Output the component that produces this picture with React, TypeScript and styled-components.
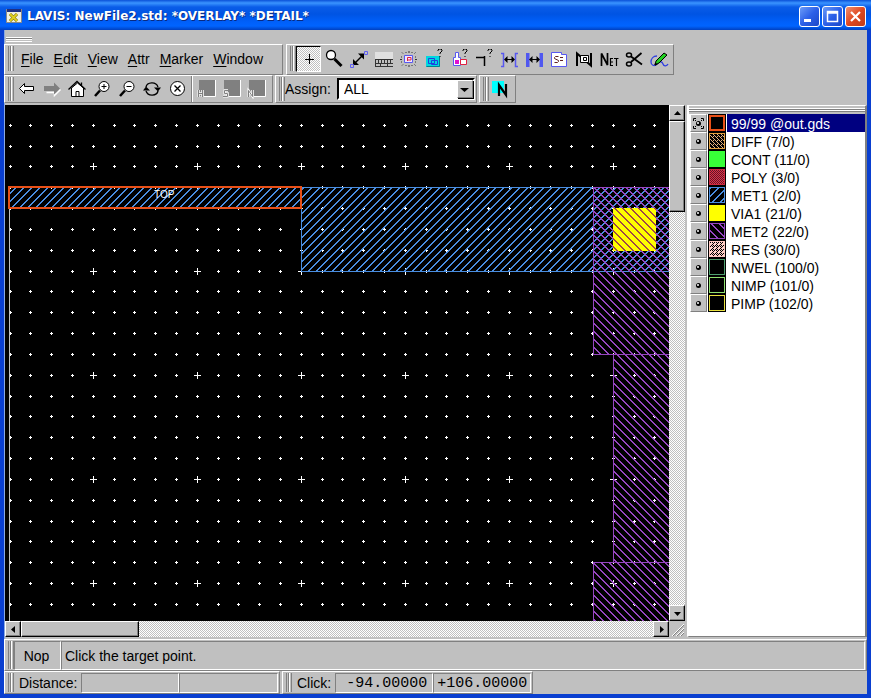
import React from "react";
import styled, { createGlobalStyle, css } from "styled-components";

const face = "#c0c0c0";
const shade = "#808080";
const met1 = "#4a8ee0";
const met2 = "#9646c0";
const outline = "#e85018";

const Global = createGlobalStyle`
  * { box-sizing: border-box; }
  body { margin: 0; font: 14px/18px "Liberation Sans", Arial, sans-serif; color: #000; }
  button, select, input { font: inherit; color: inherit; margin: 0; padding: 0; border: 0; border-radius: 0; background: none; }
  svg { display: block; }
`;

const raised = css`
  border: 1px solid;
  border-color: #fff ${shade} ${shade} #fff;
`;
const sunken = css`
  border: 1px solid;
  border-color: ${shade} #fff #fff ${shade};
`;

const Window = styled.div`
  display: flex;
  flex-direction: column;
  min-height: 100vh;
  background: ${face};
  border: solid #0a3fd0;
  border-width: 0 4px 4px;
  box-shadow: inset 1px 0 #8aa8e0;
`;
const TitleBar = styled.header`
  display: flex;
  align-items: center;
  height: 30px;
  margin: 0 -4px;
  padding: 2px 5px 0 6px;
  background: linear-gradient(#0a50d8, #3a94ff 3px, #0a5ce8 7px, #0054e3 14px, #0060fa 22px, #0064ff 26px, #0040c0 30px);
`;
const Title = styled.h1`
  flex: 1;
  margin: 0 0 0 5px;
  font: bold 12px/16px "DejaVu Sans", sans-serif;
  color: #fff;
  text-shadow: 1px 1px #0a2a80;
`;
const Caption = styled.button<{ $close?: boolean }>`
  width: 21px;
  height: 21px;
  margin-left: 2px;
  border: 1px solid #fff;
  border-radius: 3px;
  background: ${(p) =>
    p.$close
      ? "linear-gradient(135deg, #f09070, #e04820 50%, #c03c18)"
      : "linear-gradient(135deg, #6c9cf8, #2c60e8 50%, #1c48c8)"};
`;
const TopGrip = styled.div`
  width: 26px;
  height: 5px;
  margin: 7px 0 2px 2px;
  border: solid;
  border-width: 1px 0;
  border-color: #fff ${shade};
  background: linear-gradient(${shade} 1px, #fff 1px, #fff 2px, ${face} 2px);
`;
const Bars = styled.div<{ $gap?: number }>`
  display: flex;
  gap: ${(p) => p.$gap ?? 2}px;
  flex: none;
`;
const Bar = styled.div<{ $height: number; $grow?: boolean; $width?: number; $end?: number; $lift?: boolean }>`
  ${raised}
  display: flex;
  align-items: center;
  flex: ${(p) => (p.$grow ? "1 1 auto" : "none")};
  width: ${(p) => (p.$width ? p.$width + "px" : "auto")};
  height: ${(p) => p.$height}px;
  padding: 0 ${(p) => p.$end ?? 0}px ${(p) => (p.$lift ? 2 : 0)}px 3px;
`;
const Grip = styled.div`
  flex: none;
  align-self: stretch;
  width: 6px;
  margin: 1px 0;
  border: solid;
  border-width: 0 1px;
  border-color: #fff ${shade};
  background: linear-gradient(90deg, ${face} 1px, ${shade} 1px, ${shade} 2px, #fff 2px, #fff 3px, ${face} 3px);
`;
const Menu = styled.nav`
  display: flex;
  gap: 10px;
  padding-left: 7px;
`;
const MenuItem = styled.button`
  line-height: 18px;
`;
const Underlined = styled.span`
  text-decoration: underline;
  text-underline-offset: 2px;
  text-decoration-thickness: 1px;
`;
const Tool = styled.button<{ $pressed?: boolean }>`
  display: grid;
  place-items: center;
  flex: none;
  width: 25px;
  height: 26px;
  ${(p) =>
    p.$pressed &&
    css`
      border: 1px solid;
      border-color: #000 #fff #fff #000;
      background: repeating-conic-gradient(#fff 0 25%, ${face} 0 50%) 0 0 / 2px 2px;
    `}
`;
const Divider = styled.div`
  width: 2px;
  height: 26px;
  margin: 0 0 0 2px;
  border-left: 1px solid ${shade};
  border-right: 1px solid #fff;
`;
const Combo = styled.div`
  position: relative;
  width: 138px;
  height: 22px;
  margin-left: 6px;
  border: 2px solid;
  border-color: #000 #fff #fff #000;
  background: #fff;
`;
const Choice = styled.select`
  appearance: none;
  width: 100%;
  height: 18px;
  padding-left: 5px;
  outline: 0;
`;
const ComboArrow = styled.span`
  ${raised}
  position: absolute;
  right: 0;
  top: 0;
  display: grid;
  place-items: center;
  width: 16px;
  height: 18px;
  background: ${face};
  box-shadow: 1px 1px #000;
  pointer-events: none;
`;
const Work = styled.main`
  flex: 1;
  display: grid;
  grid-template-columns: minmax(0, 1fr) 180px;
  gap: 2px;
  padding-left: 1px;
  margin-top: 2px;
`;
const View = styled.section`
  display: grid;
  grid-template-columns: minmax(0, 1fr) 16px;
  grid-template-rows: minmax(0, 1fr) 16px;
`;
const Canvas = styled.svg`
  width: 100%;
  height: 100%;
  background: #000;
`;
const Track = styled.div<{ $vertical?: boolean }>`
  display: flex;
  flex-direction: ${(p) => (p.$vertical ? "column" : "row")};
  justify-content: space-between;
  background: repeating-conic-gradient(#fff 0 25%, ${face} 0 50%) 0 0 / 2px 2px;
`;
const TrackEnd = styled.div<{ $vertical?: boolean }>`
  display: flex;
  flex-direction: ${(p) => (p.$vertical ? "column" : "row")};
`;
const Key = styled.button`
  display: grid;
  place-items: center;
  width: 16px;
  height: 16px;
  border: 1px solid;
  border-color: #fff #000 #000 #fff;
  background: ${face};
  box-shadow: inset -1px -1px ${shade};
`;
const Thumb = styled.div<{ $vertical?: boolean }>`
  width: ${(p) => (p.$vertical ? 16 : 118)}px;
  height: ${(p) => (p.$vertical ? 91 : 16)}px;
  border: 1px solid;
  border-color: #fff #000 #000 #fff;
  background: ${face};
  box-shadow: inset -1px -1px ${shade};
`;
const Layers = styled.aside`
  border: 1px solid;
  border-color: #fff ${shade} ${shade} #fff;
  border-width: 1px 2px 1px 2px;
  background: #fff;
`;
const LayerGrip = styled.div`
  height: 8px;
  border: solid ${face};
  border-width: 2px 0 2px;
  background: linear-gradient(#fff 1px, ${shade} 1px, ${shade} 2px, #fff 2px, #fff 3px, ${shade} 3px);
`;
const LayerList = styled.ul`
  margin: 0;
  padding: 0 0 0 1px;
  list-style: none;
`;
const Layer = styled.li`
  display: flex;
  height: 18px;
`;
const Eye = styled.button`
  display: grid;
  place-items: center;
  width: 17px;
  height: 18px;
  border: 1px solid;
  border-color: #fff ${shade} ${shade} #fff;
  background: ${face};
`;
const LayerName = styled.button<{ $active?: boolean }>`
  flex: 1;
  padding: 2px 0 0 4px;
  line-height: 16px;
  text-align: left;
  background: ${(p) => (p.$active ? "#000080" : "#fff")};
  color: ${(p) => (p.$active ? "#fff" : "#000")};
`;
const Field = styled.output<{ $width?: number; $height: number; $mono?: boolean; $center?: boolean }>`
  ${sunken}
  flex: ${(p) => (p.$width ? "none" : "1")};
  width: ${(p) => (p.$width ? p.$width + "px" : "auto")};
  height: ${(p) => p.$height}px;
  line-height: ${(p) => p.$height - 1}px;
  padding: 0 5px 0 3px;
  text-align: ${(p) => (p.$mono ? "right" : p.$center ? "center" : "left")};
  ${(p) => p.$mono && css`font-family: "Liberation Mono", monospace; font-size: 15px;`}
`;
const FieldLabel = styled.label`
  padding: 0 4px 0 5px;
`;
const Status = styled.footer`
  margin-top: 2px;
`;

/* 20 x 20 toolbar glyphs */
const Glyph = ({ children }: { children: React.ReactNode }) => (
  <svg width="20" height="20" viewBox="0 0 20 20" fill="none" stroke="#000" aria-hidden="true">
    {children}
  </svg>
);
const Query = ({ x = 16, y = 2 }: { x?: number; y?: number }) => (
  <path d={`M${x - 2} ${y}v-1l1-1h2l1 1v1l-2 2v1M${x} ${y + 5}v1`} strokeWidth="1" />
);
const Gap = () => <path d="M6 10.5h9" />;
const Heads = () => <path d="M5 10.5l3.5-3.5v7zM16 10.5l-3.5-3.5v7z" fill="#000" stroke="none" />;

const editTools: { name: string; art: React.ReactNode }[] = [
  { name: "Point", art: <path d="M10.5 5v10M6 10h9" shapeRendering="crispEdges" /> },
  {
    name: "Zoom",
    art: (<><circle cx="7" cy="6" r="4.5" fill="#fff" strokeWidth="1.3" /><path d="M10.5 10l7 7" strokeWidth="3" /></>),
  },
  {
    name: "Measure",
    art: (<>
      <path d="M5 15l9-9" strokeWidth="1.5" /><path d="M15 4.5v6l-6-6zM4 16v-6l6 6z" fill="#000" stroke="none" />
      <path d="M15.5 2.5h3v3h-3zM1.5 15.5h3v3h-3z" stroke="#6060f0" />
    </>),
  },
  {
    name: "Ruler",
    art: (<g shapeRendering="crispEdges">
      <path d="M1 3h18v7H1z" fill="#e0e0e0" stroke="none" />
      <path d="M1.5 10v7M1 10.5h18M1 14.5h18M4.5 11v3M7.5 11v3M10.5 11v3M13.5 11v3M16.5 11v3" stroke="#333" />
      <path d="M1 17.5h18M6.5 15v2M13.5 15v2" stroke="#333" />
    </g>),
  },
  {
    name: "Highlight",
    art: (<>
      <path d="M5.500 6.500h8v7h-8z" fill="#f0e8ff" stroke="#5858f0" /><path d="M8.500 12V8.500H12v2.500H9" stroke="#e02040" />
      <path d="M7 4V3M10 4V2M13 4V3M7 16v1M10 16v2M13 16v1M3 8H2M3 10.500H1M3 13H2M16 8h1M16 10.500h2M16 13h1M4 4.500l-1-1M15.500 4.500l1-1M4 15.500l-1 1M15.500 15.500l1 1" stroke="#333" />
    </>),
  },
  {
    name: "Query cell",
    art: (<>
      <path d="M2 7h14v11H2z" fill="#00d8e0" stroke="none" /><path d="M2.5 17.5h13v-10" stroke="#008090" />
      <path d="M4.5 9.5h6v5h-6zM7.5 11.5h6v4h-6z" stroke="#2040e0" /><Query />
    </>),
  },
  {
    name: "Query shape",
    art: (<>
      <path d="M6.5 3.5h3v5h2v8h-7v-8h2z" fill="#fff" stroke="#5858f0" /><path d="M6 11h4v4H6z" fill="#e010d0" stroke="none" />
      <path d="M11.5 10.5h6v5h-6z" fill="#fff" stroke="#e02040" /><Query />
    </>),
  },
  { name: "Query node", art: (<><path d="M2 8.5h9M10.5 7v10" strokeWidth="1.5" /><Query /></>) },
  {
    name: "Space",
    art: (<><path d="M2 4.5h2.5v13H2M19 4.5h-2.5v13H19" stroke="#5858f0" strokeWidth="1.5" /><Gap /><Heads /></>),
  },
  {
    name: "Width",
    art: (<><path d="M2 4h3.5v14H2zM15.5 4H19v14h-3.5z" fill="#5058f0" stroke="none" /><Gap /><Heads /></>),
  },
  {
    name: "Script",
    art: (<>
      <path d="M2.5 3.5h10v2h5v12h-15z" fill="#fff" stroke="#5858f0" />
      <path d="M9.5 7.5h-3l-1 1v1l4 2v1l-1 1h-3M11 8.5h3M11 11.5h3" stroke="#602020" />
    </>),
  },
  {
    name: "Net box",
    art: (<>
      <path d="M3 17V4.5l14 12V4" strokeWidth="2" /><path d="M6.5 6.5h8v7h-8z" fill="#fff" /><path d="M9.5 8.5h3v3h-3z" />
    </>),
  },
  {
    name: "Net",
    art: (<><path d="M2.5 17V4.5L8.5 16V4" strokeWidth="1.7" /><path d="M14 9.5h-2.5v7H14M11.5 13H14M15 9.5h4.5M17.5 9.5V17" strokeWidth="1.2" /></>),
  },
  {
    name: "Cut",
    art: (<><path d="M17.5 4L7 13M18 15.5L7 7.5" strokeWidth="1.8" /><ellipse cx="5" cy="6" rx="2.5" ry="2" strokeWidth="1.5" /><ellipse cx="5" cy="15" rx="2.5" ry="2" strokeWidth="1.5" /></>),
  },
  {
    name: "Draw",
    art: (<>
      <path d="M8 7C4 7 2 10 2 13s3 5 6 2 5-3 6 0 4 2 5 0" stroke="#3040e0" strokeWidth="1.3" />
      <path d="M6 16l1-4 8-8 3 2-8 8z" fill="#20d020" /><path d="M6 16l2-.5-1.5-1.5z" fill="#000" />
    </>),
  },
];

const navTools: { name: string; art: React.ReactNode }[] = [
  { name: "Back", art: <path d="M2.5 9.5l5-5v3h9v4h-9v3z" fill="#fff" /> },
  {
    name: "Forward",
    art: (<><path d="M18.5 10.5l-6 6v-3h-8" stroke="#fff" strokeWidth="1.5" /><path d="M18 9.5l-6-6v3.5H2v5h10v3.5z" fill={shade} stroke="none" /></>),
  },
  {
    name: "Home",
    art: (<><path d="M4.5 9v8.5h12V9L10.5 4z" fill="#fff" /><path d="M1.5 10.5L10 2.5l8.5 8M14.5 6V3.5" strokeWidth="1.3" /><path d="M9 17.5v-5h3v5" /></>),
  },
  {
    name: "Zoom in",
    art: (<><circle cx="12" cy="7.5" r="5" fill="#fff" /><path d="M12 5v5M9.5 7.5h5" /><path d="M8 11.5L3 17" strokeWidth="2.5" /></>),
  },
  {
    name: "Zoom out",
    art: (<><circle cx="12" cy="7.5" r="5" fill="#fff" /><path d="M9.5 7.5h5" /><path d="M8 11.5L3 17" strokeWidth="2.5" /></>),
  },
  {
    name: "Redraw",
    art: (<><path d="M4 8c1-5 10-6 12 0M16 12c-1 5-10 6-12 0" strokeWidth="1.3" /><path d="M1 11.5l3-4 4 4zM12 8.500h7l-3 4z" fill="#000" stroke="none" /></>),
  },
  { name: "Stop", art: (<><circle cx="10.5" cy="9.5" r="7" fill="#fff" /><path d="M7.5 6.5l6 6M13.5 6.5l-6 6" strokeWidth="1.3" /></>) },
];

const letters: Record<string, string> = {
  H: "M2.5 11v7M6.5 11v7M2.5 14.5h4",
  S: "M7 11.5H3.5v3h3v3H2",
  N: "M2.5 18v-6.5l4 6V11",
};
const Saved = ({ letter }: { letter: string }) => (
  <Glyph>
    <path d="M3 1h16v16H3z" fill={shade} stroke="none" />
    <path d="M19.5 1v16.5H8" stroke="#fff" />
    <path d={letters[letter]} stroke={face} strokeWidth="3" />
    <path d={letters[letter]} stroke="#fff" strokeWidth="2" />
    <path d={letters[letter]} stroke={shade} />
  </Glyph>
);

const Arrow = ({ d }: { d: string }) => (
  <svg width="9" height="9" viewBox="0 0 9 9" aria-hidden="true"><path d={d} /></svg>
);

const hatch = (c: number, dir: number) => {
  let d = "";
  for (let y = 0; y < 8; y++) {
    const x = (((c + dir * y) % 8) + 8) % 8;
    d += `M${x} ${y}h2v1h-2z`;
    if (x === 7) d += `M0 ${y}h1v1h-1z`;
  }
  return d;
};

type LayerInfo = { name: string; color: string; fill?: string; heavy?: boolean };
const layers: LayerInfo[] = [
  { name: "99/99 @out.gds", color: outline, heavy: true },
  { name: "DIFF (7/0)", color: "#e0a040", fill: "url(#diff)" },
  { name: "CONT (11/0)", color: "#38ff38", fill: "#38ff38" },
  { name: "POLY (3/0)", color: "#d02840", fill: "url(#poly)" },
  { name: "MET1 (2/0)", color: met1, fill: "url(#met1)" },
  { name: "VIA1 (21/0)", color: "#ffff00", fill: "#ffff00" },
  { name: "MET2 (22/0)", color: met2, fill: "url(#met2)" },
  { name: "RES (30/0)", color: "#ffc8c0", fill: "url(#res)" },
  { name: "NWEL (100/0)", color: "#50a070" },
  { name: "NIMP (101/0)", color: "#90e070" },
  { name: "PIMP (102/0)", color: "#e8e040" },
];

const Swatch = ({ layer }: { layer: LayerInfo }) => (
  <svg width="20" height="18" viewBox="0 0 20 18" shapeRendering="crispEdges" aria-hidden="true">
    <path d="M1 0h18v18H1z" />
    {layer.heavy ? (
      <path d="M3 2h14v14H3z" fill="none" stroke={layer.color} strokeWidth="2" />
    ) : (
      <path d="M2.5 1.5h15v15h-15z" fill={layer.fill ?? "#000"} stroke={layer.color} />
    )}
  </svg>
);

const EyeGlyph = ({ framed }: { framed: boolean }) => (
  <svg width="15" height="15" viewBox="0 0 15 15" fill="none" stroke="#000" aria-hidden="true">
    {framed && <path d="M2.5 5V2.5H5M10 2.5h2.5V5M12.5 10v2.5H10M5 12.5H2.5V10M5 5L4 4M10 5l1-1M5 10l-1 1M10 10l1 1" />}
    <circle cx="7.5" cy="7.5" r="2.5" fill="#000" stroke="none" />
    <circle cx="7" cy="7" r="1" fill="#fff" stroke="none" />
  </svg>
);

/* Grid marks: a small cross each step, a large one each fifth step */
const gridMarks = () => {
  let d = "";
  for (let j = -2; j < 60; j++)
    for (let i = -4; i < 90; i++) {
      const x = Math.floor(88.3 + 20.8 * i);
      const y = Math.floor(61.9 + 20.83 * j);
      const r = i % 5 === 0 && j % 5 === 0 ? 3 : 1;
      d += `M${x - r} ${y}h${2 * r + 1}v1h-${2 * r + 1}zM${x} ${y - r}h1v${2 * r + 1}h-1z`;
    }
  return d;
};

const Layout = () => (
  <Canvas role="img" aria-label="Layout view" shapeRendering="crispEdges">
    <defs>
      <pattern id="met1" width="8" height="8" patternUnits="userSpaceOnUse"><path d={hatch(4, -1)} fill={met1} /></pattern>
      <pattern id="met2" width="8" height="8" patternUnits="userSpaceOnUse"><path d={hatch(2, 1)} fill={met2} /></pattern>
      <pattern id="via" width="8" height="8" patternUnits="userSpaceOnUse"><path d={hatch(2, 1)} fill="#a04848" /></pattern>
      <pattern id="diff" width="4" height="4" patternUnits="userSpaceOnUse"><path d="M0 0h4v4H0z" /><path d="M0 0h1v1H0zM2 2h1v1H2zM2 0h1v1H2zM1 1h1v1H1zM3 3h1v1H3z" fill="#e0b080" /></pattern>
      <pattern id="poly" width="2" height="2" patternUnits="userSpaceOnUse"><path d="M0 0h2v2H0z" fill="#601828" /><path d="M0 0h1v1H0zM1 1h1v1H1z" fill="#e03048" /></pattern>
      <pattern id="res" width="4" height="4" patternUnits="userSpaceOnUse"><path d="M0 0h4v4H0z" /><path d="M0 0h1v1H0zM2 0h2v1H2zM1 1h1v1H1zM3 1h1v1H3zM0 2h1v1H0zM2 2h1v1H2zM0 3h2v1H0zM3 3h1v1H3z" fill="#ffd0c8" /></pattern>
    </defs>
    <path d={gridMarks()} fill="#fff" />
    <path d="M4 103h1v1000H4z" fill="#c0c0c0" />
    <g fill="none">
      <path d="M296.5 82.5h1000v84h-1000z" fill="url(#met1)" stroke={met1} />
      <path d="M4 82h292v21H4z" fill="url(#met1)" />
      <path d="M588.5 82.5h1000v167h-1000z" fill="url(#met2)" stroke={met2} />
      <path d="M608.5 249.5h1000v208h-1000z" fill="url(#met2)" stroke={met2} />
      <path d="M588.5 457.5h1000v1000h-1000z" fill="url(#met2)" stroke={met2} />
      <path d="M608 103h43v43h-43z" fill="#ffff00" />
      <path d="M608 103h43v43h-43z" fill="url(#via)" />
      <path d="M4 82h292v21H4z" stroke={outline} strokeWidth="2" />
    </g>
    <text x="149" y="93" fill="#fff" fontSize="10" fontFamily="Liberation Sans, Arial, sans-serif">TOP</text>
  </Canvas>
);

const menu = ["File", "Edit", "View", "Attr", "Marker", "Window"];

export default function App() {
  return (
    <Window>
      <Global />
      <TitleBar>
        <svg width="16" height="16" viewBox="0 0 16 16" aria-hidden="true">
          <path d="M.5 1.5h15v13H.5z" fill="#f0f0e0" stroke="#888" /><path d="M1 1h14v3H1z" fill="#203080" />
          <path d="M4 6l7 7M11 6l-7 7" stroke="#706000" strokeWidth="3" /><path d="M4 6l7 7M11 6l-7 7" stroke="#e0d020" strokeWidth="2" />
        </svg>
        <Title>LAVIS: NewFile2.std: *OVERLAY* *DETAIL*</Title>
        <Caption aria-label="Minimize"><svg width="19" height="19"><path d="M4 12h7v3H4z" fill="#fff" /></svg></Caption>
        <Caption aria-label="Maximize"><svg width="19" height="19"><path d="M4.5 4.5h10v10h-10zM4 6h11" fill="none" stroke="#fff" strokeWidth="1.5" /></svg></Caption>
        <Caption $close aria-label="Close"><svg width="19" height="19"><path d="M5 5l9 9M14 5l-9 9" stroke="#fff" strokeWidth="2.2" /></svg></Caption>
      </TitleBar>
      <TopGrip />
      <Bars $gap={3}>
        <Bar $height={31} $width={279} $lift>
          <Grip />
          <Menu>
            {menu.map((m) => (
              <MenuItem key={m}><Underlined>{m[0]}</Underlined>{m.slice(1)}</MenuItem>
            ))}
          </Menu>
        </Bar>
        <Bar $height={31} $end={2} $lift>
          <Grip />
          {editTools.map((t, i) => (
            <Tool key={t.name} $pressed={i === 0} aria-label={t.name}><Glyph>{t.art}</Glyph></Tool>
          ))}
        </Bar>
      </Bars>
      <Bars>
        <Bar $height={28} $width={269}>
          <Grip />
          {navTools.map((t) => (
            <Tool key={t.name} aria-label={t.name}><Glyph>{t.art}</Glyph></Tool>
          ))}
          <Divider />
          {["H", "S", "N"].map((l) => (
            <Tool key={l} aria-label={l} disabled><Saved letter={l} /></Tool>
          ))}
        </Bar>
        <Bar $height={28} $end={1}>
          <Grip />
          <label htmlFor="assign">Assign:</label>
          <Combo>
            <Choice id="assign" defaultValue="ALL"><option>ALL</option></Choice>
            <ComboArrow><Arrow d="M0 3h9L4.5 7z" /></ComboArrow>
          </Combo>
        </Bar>
        <Bar $height={28} $end={1}>
          <Grip />
          <Tool aria-label="Net color">
            <Glyph><path d="M1 2h12v12H1z" fill="#00ffff" stroke="none" /><path d="M8 17V6l7 10V5" strokeWidth="2.2" /></Glyph>
          </Tool>
        </Bar>
      </Bars>
      <Work>
        <View>
          <Layout />
          <Track $vertical>
            <TrackEnd $vertical>
              <Key aria-label="Scroll up"><Arrow d="M1 6h7L4.5 2z" /></Key>
              <Thumb $vertical />
            </TrackEnd>
            <Key aria-label="Scroll down"><Arrow d="M1 3h7L4.5 7z" /></Key>
          </Track>
          <Track>
            <TrackEnd>
              <Key aria-label="Scroll left"><Arrow d="M6 1v7L2 4.5z" /></Key>
              <Thumb />
            </TrackEnd>
            <Key aria-label="Scroll right"><Arrow d="M3 1v7l4-3.5z" /></Key>
          </Track>
          <svg width="16" height="16" aria-hidden="true">
            <path d="M3 15L15 3M7 15l8-8M11 15l4-4" stroke="#fff" /><path d="M4 15L15 4M8 15l7-7M12 15l3-3" stroke={shade} />
          </svg>
        </View>
        <Layers>
          <LayerGrip />
          <LayerList>
            {layers.map((l, i) => (
              <Layer key={l.name}>
                <Eye aria-label={"Show " + l.name}><EyeGlyph framed={i === 0} /></Eye>
                <Swatch layer={l} />
                <LayerName $active={i === 0}>{l.name}</LayerName>
              </Layer>
            ))}
          </LayerList>
        </Layers>
      </Work>
      <Status>
        <Bars>
          <Bar $height={32} $grow $end={1}>
            <Grip />
            <Field $width={47} $height={29} $center>Nop</Field>
            <Field $height={29}>Click the target point.</Field>
          </Bar>
        </Bars>
        <Bars>
          <Bar $height={23} $width={276} $end={1}>
            <Grip />
            <FieldLabel htmlFor="dx">Distance:</FieldLabel>
            <Field id="dx" $width={98} $height={20} />
            <Field id="dy" aria-label="Distance Y" $height={20} />
          </Bar>
          <Bar $height={23} $end={1}>
            <Grip />
            <FieldLabel htmlFor="cx">Click:</FieldLabel>
            <Field id="cx" $width={98} $height={20} $mono>-94.00000</Field>
            <Field id="cy" aria-label="Click Y" $width={98} $height={20} $mono>+106.00000</Field>
          </Bar>
        </Bars>
      </Status>
    </Window>
  );
}
